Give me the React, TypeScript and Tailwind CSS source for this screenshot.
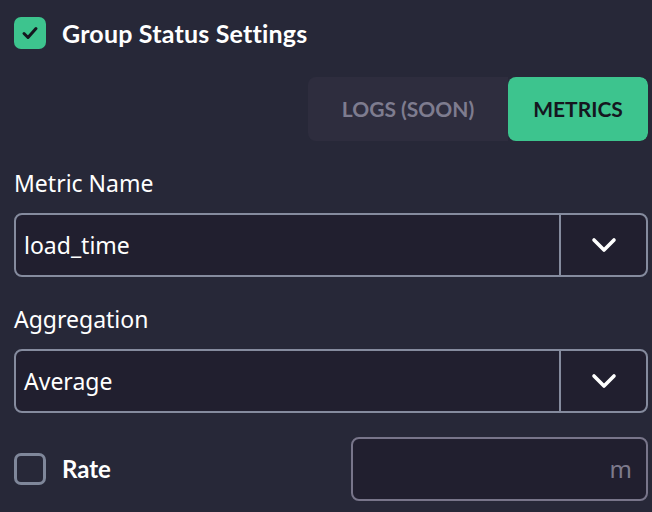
import { useState } from 'react'

function Chevron() {
  return (
    <svg width="26" height="16" viewBox="0 0 26 16" fill="none">
      <path d="M3 3l10 10L23 3" stroke="#ffffff" strokeWidth="3.6" strokeLinecap="round" strokeLinejoin="round" />
    </svg>
  )
}

function SelectBox({ value }: { value: string }) {
  return (
    <div className="flex h-[64px] w-full rounded-[8px] border-2 border-[#858b9e] bg-[#211f2f]">
      <div className="flex flex-1 items-center pl-[8px] text-[23px] text-white">{value}</div>
      <div className="flex w-[87px] items-center justify-center border-l-2 border-[#858b9e]">
        <Chevron />
      </div>
    </div>
  )
}

export default function App() {
  const [tab] = useState('metrics')

  return (
    <div
      className="h-[512px] w-[652px] overflow-hidden bg-[#272838] pl-[14px] pr-[4px] pt-[17px]"
      style={{ fontFamily: '"Noto Sans", sans-serif' }}
    >
      {/* header */}
      <div className="flex items-center gap-[16px]">
        <div className="flex h-[32px] w-[32px] items-center justify-center rounded-[7px] bg-[#3dc48e]">
          <svg width="20" height="20" viewBox="0 0 20 20" fill="none">
            <path d="M4 10.5l4 4 8-9" stroke="#15161f" strokeWidth="3" strokeLinecap="round" strokeLinejoin="round" />
          </svg>
        </div>
        <span className="text-[25px] font-bold leading-[32px] tracking-[0.2px] text-white" style={{ fontFamily: 'Lato, sans-serif' }}>
          Group Status Settings
        </span>
      </div>

      {/* tabs */}
      <div className="mt-[28px] flex justify-end">
        <div className="flex h-[64px] overflow-hidden rounded-[8px]">
          <div className="flex w-[200px] items-center justify-center bg-[#2e2d3e] text-[21px] font-bold text-[#7e7c8f]" style={{ fontFamily: 'Lato, sans-serif' }}>
            LOGS (SOON)
          </div>
          <div
            className={`flex w-[140px] items-center justify-center rounded-[8px] text-[21px] font-bold ${tab === 'metrics' ? 'bg-[#3dc48e] text-[#15161f]' : ''}`}
            style={{ fontFamily: 'Lato, sans-serif' }}
          >
            METRICS
          </div>
        </div>
      </div>

      {/* metric name */}
      <div className="mt-[28px] text-[23px] leading-[28px] text-white">Metric Name</div>
      <div className="mt-[16px]">
        <SelectBox value="load_time" />
      </div>

      {/* aggregation */}
      <div className="mt-[28px] text-[23px] leading-[28px] text-white">Aggregation</div>
      <div className="mt-[16px]">
        <SelectBox value="Average" />
      </div>

      {/* rate */}
      <div className="mt-[24px] flex items-center justify-between">
        <div className="flex items-center gap-[16px]">
          <div className="h-[32px] w-[32px] rounded-[7px] border-[3px] border-[#7f879a]" />
          <span className="text-[24px] font-bold leading-[32px] text-white" style={{ fontFamily: 'Lato, sans-serif' }}>
            Rate
          </span>
        </div>
        <div className="flex h-[64px] w-[297px] items-center justify-end rounded-[8px] border-2 border-[#78758a] bg-[#211f2f] pr-[14px] text-[24px] text-[#7d7a8c]">
          m
        </div>
      </div>
    </div>
  )
}
